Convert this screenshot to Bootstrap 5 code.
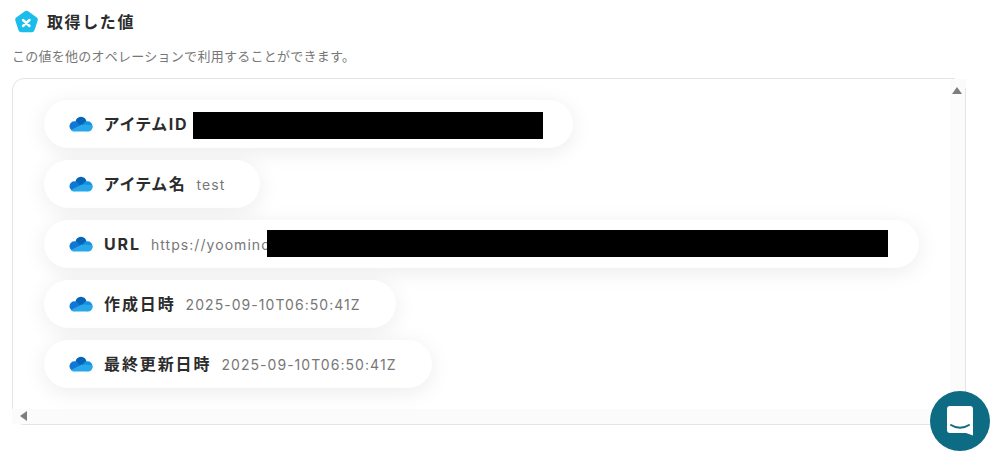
<!DOCTYPE html>
<html lang="ja">
<head>
    <meta charset="UTF-8">
    <meta name="viewport" content="width=device-width, initial-scale=1.0">
    <title>取得した値</title>
    <link href="https://cdn.jsdelivr.net/npm/bootstrap@5.3.0/dist/css/bootstrap.min.css" rel="stylesheet">
    <style>
        html, body { height: 458px; overflow: hidden; }
        body {
            background: #fff;
            color: #2c2c2c;
            font-family: "Inter", "Noto Sans CJK JP", sans-serif;
            padding: 8px 32px 0 12px;
        }
        .head-row { height: 28px; padding-left: 2px; gap: 8px; }
        .head-title { font-size: 16px; font-weight: 700; line-height: 28px; margin: 0; letter-spacing: 1.6px; }
        .head-note { font-size: 13px; line-height: 18px; color: #777; margin: 11px 0 0; letter-spacing: .26px; }
        .value-box {
            position: relative;
            height: 347px;
            margin-top: 13px;
            border: 1px solid #e4e4e4;
            border-radius: 12px;
        }
        .value-main { padding: 21px 0 0 31px; gap: 12px; }
        .value-pill {
            height: 48px;
            padding-left: 25px;
            border-radius: 24px;
            background: #fff;
            box-shadow: 0 4px 22px rgba(0, 0, 0, .08);
        }
        .pill-name { font-size: 16px; font-weight: 700; margin-left: 11px; letter-spacing: 1.9px; font-feature-settings: "palt"; white-space: nowrap; }
        .pill-value { font-size: 14px; color: #777; margin-left: 10px; letter-spacing: 1.05px; white-space: nowrap; }
        .pill-block { background: #000; height: 27px; }
        .block-id { margin: 2px 0 0 4px; }
        .block-url { margin: 0 0 1px -3px; }
        .bar-v { position: absolute; top: 0; right: -1px; bottom: 0; width: 16px; background: #fbfbfb; }
        .bar-v::before { content: ""; position: absolute; top: -1px; left: 5px; right: 0; height: 1px; background: #fff; }
        .bar-v::after { content: ""; position: absolute; top: 9px; right: 0; bottom: 0; width: 1px; background: #e4e4e4; }
        .bar-h { position: absolute; left: -1px; right: 15px; bottom: 0; height: 15px; background: #fbfbfb; }
        .arrow-up {
            position: absolute; top: 8px; left: 2px; width: 0; height: 0;
            border-left: 5px solid transparent; border-right: 5px solid transparent; border-bottom: 7px solid #7d7d7d;
        }
        .arrow-left {
            position: absolute; top: 2px; left: 8px; width: 0; height: 0;
            border-top: 5px solid transparent; border-bottom: 5px solid transparent; border-right: 7px solid #7d7d7d;
        }
        .chat-btn {
            position: absolute; left: 930px; top: 391px;
            width: 60px; height: 60px; border-radius: 50%;
            background: #0e6b84;
        }
    </style>
</head>
<body>
    <svg width="0" height="0" class="d-block">
        <defs>
            <symbol id="cloud" viewBox="0 0 24 16">
                <circle cx="12" cy="6.200" r="5.500" fill="#0364b8"/>
                <circle cx="5.500" cy="10.300" r="5" fill="#0f78d4"/>
                <circle cx="18.500" cy="10.300" r="5" fill="#1490df"/>
                <path d="M2 14c.9 1 2.200 1.500 3.500 1.500H19c2.500 0 4.500-2 4.500-4.500 0-.7-.2-1.400-.5-2L12.500 8.500z" fill="#28a8ea"/>
            </symbol>
        </defs>
    </svg>

    <div class="head-row d-flex align-items-center">
        <svg width="25" height="25" viewBox="0 0 25 25">
            <path d="M10.500 1.500a3.300 3.300 0 0 1 4 0l8 5.700a3 3 0 0 1 1.100 3.500l-3 9.300a3.300 3.300 0 0 1-3.100 2.300H7.500a3.300 3.300 0 0 1-3.100-2.300l-3-9.300a3 3 0 0 1 1.100-3.500z" fill="#1cbdea"/>
            <path d="M9 10l6.500 6M15.500 10L9 16" stroke="#fff" stroke-width="2.400" stroke-linecap="round"/>
        </svg>
        <h1 class="head-title">取得した値</h1>
    </div>
    <p class="head-note">この値を他のオペレーションで利用することができます。</p>

    <div class="value-box">
        <div class="value-main d-flex flex-column align-items-start">
            <div class="value-pill d-flex align-items-center" style="width: 529px">
                <svg width="24" height="16"><use href="#cloud"/></svg>
                <span class="pill-name">アイテムID</span>
                <span class="pill-block block-id" style="width: 350px"></span>
            </div>
            <div class="value-pill d-flex align-items-center" style="width: 216px">
                <svg width="24" height="16"><use href="#cloud"/></svg>
                <span class="pill-name">アイテム名</span>
                <span class="pill-value">test</span>
            </div>
            <div class="value-pill d-flex align-items-center" style="width: 875px">
                <svg width="24" height="16"><use href="#cloud"/></svg>
                <span class="pill-name">URL</span>
                <span class="pill-value">https://yoominc</span>
                <span class="pill-block block-url" style="width: 621px"></span>
            </div>
            <div class="value-pill d-flex align-items-center" style="width: 352px">
                <svg width="24" height="16"><use href="#cloud"/></svg>
                <span class="pill-name">作成日時</span>
                <span class="pill-value">2025-09-10T06:50:41Z</span>
            </div>
            <div class="value-pill d-flex align-items-center" style="width: 388px">
                <svg width="24" height="16"><use href="#cloud"/></svg>
                <span class="pill-name">最終更新日時</span>
                <span class="pill-value">2025-09-10T06:50:41Z</span>
            </div>
        </div>
        <div class="bar-h"><span class="arrow-left"></span></div>
        <div class="bar-v"><span class="arrow-up"></span></div>
    </div>

    <div class="chat-btn d-flex align-items-center justify-content-center">
        <svg width="28" height="32" viewBox="0 0 28 32">
            <path d="M4 1h20a3 3 0 0 1 3 3v26.500l-7-2.500H4a3 3 0 0 1-3-3V4a3 3 0 0 1 3-3z" fill="#fff"/>
            <path d="M5 20c5 3.500 13 3.500 18 0" fill="none" stroke="#0e6b84" stroke-width="2" stroke-linecap="round"/>
        </svg>
    </div>
</body>
</html>
